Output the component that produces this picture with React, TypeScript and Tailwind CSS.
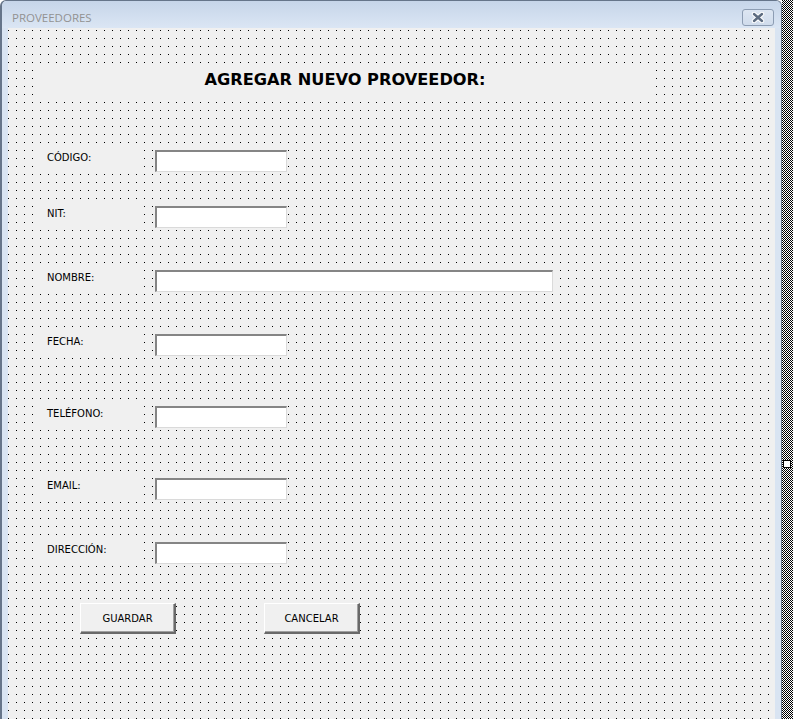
import React from "react";

const fields = [
  { label: "CÓDIGO:", mt: "mt-[53px]", wide: false },
  { label: "NIT:", mt: "mt-[34px]", wide: false },
  { label: "NOMBRE:", mt: "mt-[42px]", wide: true },
  { label: "FECHA:", mt: "mt-[42px]", wide: false },
  { label: "TELÉFONO:", mt: "mt-[50px]", wide: false },
  { label: "EMAIL:", mt: "mt-[50px]", wide: false },
  { label: "DIRECCIÓN:", mt: "mt-[42px]", wide: false },
];

function CloseIcon() {
  return (
    <svg width="14" height="11" viewBox="0 0 14 11">
      <path d="M3 2 L11 9 M11 2 L3 9" stroke="#ffffff" strokeWidth="4.4" strokeLinecap="round" />
      <path d="M3 2 L11 9 M11 2 L3 9" stroke="#5d6c80" strokeWidth="2.4" strokeLinecap="round" />
    </svg>
  );
}

// checkerboard hatch drawn around the selected form in the designer
function Hatch() {
  return (
    <svg width="11" height="719" className="block" shapeRendering="crispEdges">
      <defs>
        <pattern id="hatch" width="2" height="2" patternUnits="userSpaceOnUse">
          <rect width="2" height="2" fill="#fff" />
          <rect x="0" y="0" width="1" height="1" fill="#000" />
          <rect x="1" y="1" width="1" height="1" fill="#000" />
        </pattern>
      </defs>
      <rect width="11" height="719" fill="url(#hatch)" />
    </svg>
  );
}

function DesignButton({ children }: { children: React.ReactNode }) {
  return (
    <div className="w-[96px] h-[31px] flex items-center justify-center bg-[#f0f0f0] border-t border-l border-t-white border-l-white border-b-2 border-r-2 border-b-[#696969] border-r-[#696969] shadow-[inset_-1px_-1px_0_#a0a0a0] text-[10px] text-black">
      {children}
    </div>
  );
}

export default function App() {
  return (
    <div className="flex w-[793px] h-[719px] overflow-hidden bg-white font-['DejaVu_Sans',sans-serif]">
      {/* window frame */}
      <div className="flex flex-col w-[782px] h-[719px] rounded-t-[6px] border-l-2 border-t border-r border-[#66758a] bg-[#d9e4f2]">
        {/* title bar */}
        <div className="flex items-start justify-between h-[27px] rounded-t-[5px] bg-gradient-to-b from-[#c6d5e9] to-[#dbe6f4]">
          <span className="pl-[10px] pt-[9px] font-['Open_Sans',sans-serif] text-[11.5px] leading-[16px] text-[#929292]">
            PROVEEDORES
          </span>
          <div className="mt-[8px] mr-[7px] w-[32px] h-[17px] flex items-center justify-center rounded-[3px] border border-[#8d9db3] bg-gradient-to-b from-[#dde6f2] to-[#d0dcec]">
            <CloseIcon />
          </div>
        </div>

        {/* client area */}
        <div className="flex-1 mx-[6px] flex flex-col bg-[#f0f0f0] bg-[conic-gradient(at_1px_1px,#f0f0f0_75%,#000_0)] bg-[length:8px_8px] bg-[position:0_2px]">
          <div className="mt-[36px] ml-[27px] w-[620px] h-[33px] flex items-center justify-center bg-[#f0f0f0]">
            <span className="font-bold text-[16.2px] text-black">AGREGAR NUEVO PROVEEDOR:</span>
          </div>

          {fields.map((f) => (
            <div key={f.label} className={`flex items-start ${f.mt}`}>
              <div className="ml-[32px] w-[103px] h-[22px] pl-[7px] pt-[2px] bg-[#f0f0f0] text-[10px] leading-[12px] text-black">
                {f.label}
              </div>
              <div
                className={`ml-[12px] h-[22px] bg-white border-t-2 border-l-2 border-t-[#858585] border-l-[#858585] border-b border-r border-b-[#dadada] border-r-[#dadada] ${
                  f.wide ? "w-[398px]" : "w-[132px]"
                }`}
              />
            </div>
          ))}

          <div className="flex mt-[39px] ml-[72px] gap-[88px]">
            <DesignButton>GUARDAR</DesignButton>
            <DesignButton>CANCELAR</DesignButton>
          </div>
        </div>
      </div>

      {/* designer selection border */}
      <div className="relative flex-1 h-[719px]">
        <Hatch />
        <div className="absolute left-[1px] top-[460px] w-[8px] h-[8px] bg-white border border-black" />
      </div>
    </div>
  );
}
